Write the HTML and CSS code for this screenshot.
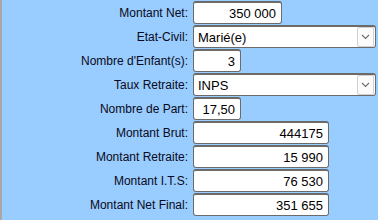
FILE: index.html
```html
<!DOCTYPE html>
<html lang="fr">
<head>
    <meta charset="UTF-8">
    <title>Calcul Salaire</title>
    <link rel="stylesheet" href="styles.css">
</head>
<body>
    <div class="panel">
        <div class="form">
            <label class="lbl">Montant Net:</label>
            <input class="field w-net" type="text" value="350 000">

            <label class="lbl">Etat-Civil:</label>
            <div class="select-wrap">
                <select class="select">
                    <option>Marié(e)</option>
                    <option>Célibataire</option>
                </select>
                <span class="select-btn">
                    <svg width="9" height="6" viewBox="0 0 9 6"><path d="M1 1 L4.5 4.5 L8 1" fill="none" stroke="#6d6d6d" stroke-width="1.1"/></svg>
                </span>
            </div>

            <label class="lbl">Nombre d'Enfant(s):</label>
            <input class="field w-small" type="text" value="3">

            <label class="lbl">Taux Retraite:</label>
            <div class="select-wrap">
                <select class="select">
                    <option>INPS</option>
                    <option>AMO</option>
                </select>
                <span class="select-btn">
                    <svg width="9" height="6" viewBox="0 0 9 6"><path d="M1 1 L4.5 4.5 L8 1" fill="none" stroke="#6d6d6d" stroke-width="1.1"/></svg>
                </span>
            </div>

            <label class="lbl">Nombre de Part:</label>
            <input class="field w-small" type="text" value="17,50">

            <label class="lbl">Montant Brut:</label>
            <input class="field w-res" type="text" value="444175">

            <label class="lbl">Montant Retraite:</label>
            <input class="field w-res" type="text" value="15 990">

            <label class="lbl">Montant I.T.S:</label>
            <input class="field w-res" type="text" value="76 530">

            <label class="lbl">Montant Net Final:</label>
            <input class="field w-res" type="text" value="351 655">
        </div>
    </div>
</body>
</html>
```

FILE: styles.css
```css
body{
    margin: 0;
    background-color: #99ccff;
    font-family: "Liberation Sans", Arial, sans-serif;
    font-size: 13px;
    color: #000;
}
.panel{
    height: 220px;
    border-left: 2px solid #a7a7a7;
    padding-top: 1px;
    box-sizing: border-box;
}
.form{
    display: grid;
    grid-template-columns: 186px auto;
    column-gap: 5px;
    row-gap: 1px;
    align-items: center;
    justify-items: start;
}
.lbl{
    justify-self: end;
    text-align: right;
    font-size: 12px;
    color: #0a0a20;
}
.field{
    height: 23px;
    box-sizing: border-box;
    margin: 0;
    border: 1px solid #6b6b6b;
    border-top-width: 2px;
    border-radius: 3px;
    background: white;
    font-family: inherit;
    font-size: 13px;
    color: #000;
    text-align: right;
    padding: 0 5px 0 4px;
}
.w-net{
    width: 89px;
}
.w-small{
    width: 48px;
}
.w-res{
    width: 136px;
}
.select-wrap{
    position: relative;
    width: 183px;
    height: 23px;
}
.select{
    appearance: none;
    -webkit-appearance: none;
    width: 100%;
    height: 23px;
    box-sizing: border-box;
    margin: 0;
    border: 1px solid #6b6b6b;
    border-top-width: 2px;
    border-radius: 3px;
    background: white;
    font-family: inherit;
    font-size: 13px;
    color: #000;
    padding: 0 22px 0 4px;
}
.select-btn{
    position: absolute;
    right: 2px;
    top: 2px;
    width: 15px;
    height: 18px;
    border: 1px solid #d0d0d0;
    border-radius: 2px;
    background: #fbfbfb;
    display: flex;
    align-items: center;
    justify-content: center;
    pointer-events: none;
}
```
